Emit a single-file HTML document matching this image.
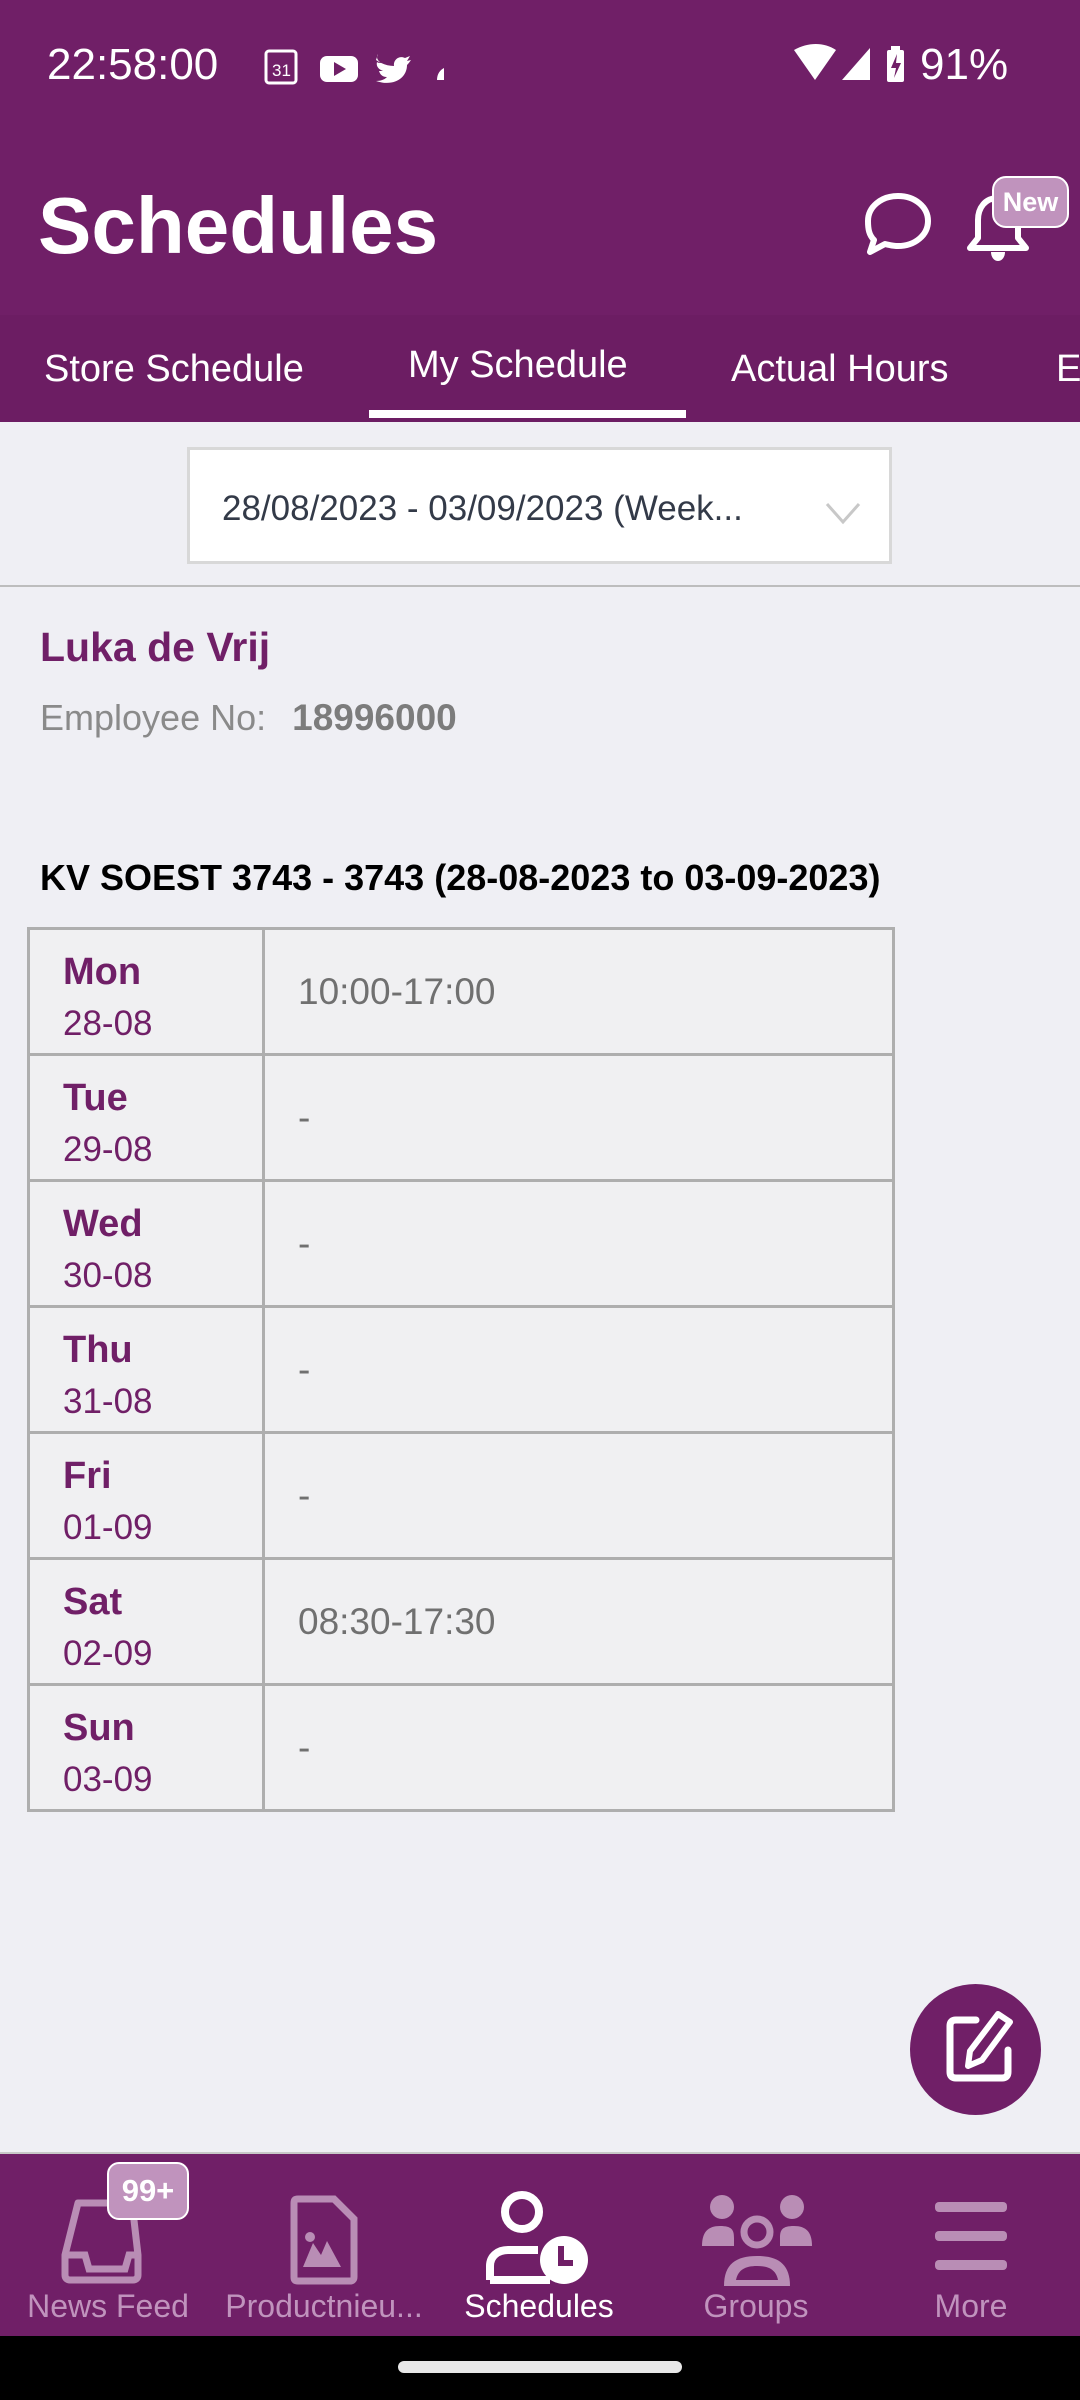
<!DOCTYPE html>
<html><head><meta charset="utf-8"><style>
*{margin:0;padding:0;box-sizing:border-box}
body{width:1080px;height:2400px;background:#efeff4;font-family:"Liberation Sans",sans-serif;position:relative;overflow:hidden}
.abs{position:absolute}
.p{background:#701f67}
.tab{position:absolute;color:#fff;font-size:38px;white-space:nowrap}
table{border-collapse:collapse;position:absolute;left:27px;top:927px;width:868px}
td{border:3px solid #aeaeae;height:126px;vertical-align:top;background:#f0f0f2}
tr{height:126px}
td.d{width:235px;padding-left:33px;color:#701f67}
td.d b{display:block;font-size:38px;margin-top:20px;line-height:44px}
td.d span{display:block;font-size:35px;line-height:40px;margin-top:10px}
td.t{padding-left:33px;color:#707070;font-size:37px;line-height:120px;vertical-align:middle}
.nl{position:absolute;top:2288px;font-size:32px;color:#c093bd;text-align:center;width:220px;white-space:nowrap}
</style></head><body>
<div class="abs p" style="left:0;top:0;width:1080px;height:315px"></div>
<div class="abs" style="left:0;top:315px;width:1080px;height:107px;background:#6c1d63"></div>
<div class="abs" style="left:47px;top:40px;color:#fff;font-size:44px">22:58:00</div>
<svg class="abs" style="left:264px;top:48px" width="190" height="40" viewBox="0 0 190 40">
<rect x="2" y="3" width="30" height="32" rx="3" fill="none" stroke="#fff" stroke-width="3"/><text x="8" y="28" font-size="17" fill="#fff" font-family="Liberation Sans">31</text>
<rect x="56" y="8" width="38" height="26" rx="7" fill="#fff"/><path d="M70 14l12 7-12 7z" fill="#701f67"/>
<path d="M112 12c6 4 12 6 18 6-1-6 5-11 11-8l5-2-3 5 4-1c-2 3-3 4-4 5 0 13-13 22-31 16 6 0 9-2 11-4-5 0-7-3-8-6h4c-5-2-7-5-6-9 1 1 3 1 4 1-4-3-5-6-3-9z" fill="#fff"/>
<path d="M180 20v12h-7c0-6 3-10 7-12z" fill="#fff"/></svg>
<svg class="abs" style="left:790px;top:44px" width="220" height="42" viewBox="0 0 220 42">
<path d="M4 6c14-8 30-8 42 0L25 36z" fill="#fff"/>
<path d="M80 4v32H52z" fill="#fff"/>
<rect x="97" y="6" width="17" height="32" rx="2" fill="#fff"/><rect x="101" y="2" width="9" height="5" fill="#fff"/><path d="M107 10l-6 14h5l-2 10 7-15h-5z" fill="#701f67"/>
</svg>
<div class="abs" style="left:920px;top:40px;color:#fff;font-size:44px">91%</div>
<div class="abs" style="left:38px;top:180px;color:#fff;font-size:80px;font-weight:bold">Schedules</div>
<svg class="abs" style="left:862px;top:190px" width="72" height="68" viewBox="0 0 72 68"><path d="M36 6c17 0 30 11 30 25S53 56 36 56c-5 0-9-1-13-2L8 62l4-12C7 45 6 39 6 31 6 17 19 6 36 6z" fill="none" stroke="#fff" stroke-width="6" stroke-linejoin="round"/></svg>
<svg class="abs" style="left:964px;top:186px" width="70" height="80" viewBox="0 0 70 80"><path d="M34 12c-13 0-20 10-20 22v18l-8 10h56l-8-10V34c0-12-7-22-20-22z" fill="none" stroke="#fff" stroke-width="6" stroke-linejoin="round"/><path d="M27 66c0 5 3 9 7 9s7-4 7-9z" fill="#fff"/></svg>
<div class="abs" style="left:992px;top:176px;width:77px;height:52px;background:#c093bd;border:2px solid #fff;border-radius:14px;color:#fff;font-weight:bold;font-size:27px;text-align:center;line-height:48px">New</div>
<div class="tab" style="left:44px;top:348px">Store Schedule</div>
<div class="tab" style="left:408px;top:344px">My Schedule</div>
<div class="tab" style="left:731px;top:348px">Actual Hours</div>
<div class="tab" style="left:1056px;top:348px">E</div>
<div class="abs" style="left:369px;top:410px;width:317px;height:8px;background:#fff"></div>
<div class="abs" style="left:187px;top:447px;width:705px;height:117px;background:#fff;border:3px solid #d8d8d8"></div>
<div class="abs" style="left:222px;top:489px;font-size:35px;color:#333a48">28/08/2023 - 03/09/2023 (Week...</div>
<svg class="abs" style="left:824px;top:500px" width="38" height="26" viewBox="0 0 38 26"><path d="M3 4l16 18L35 4" fill="none" stroke="#c8c8c8" stroke-width="3"/></svg>
<div class="abs" style="left:0;top:585px;width:1080px;height:2px;background:#bdbdbd"></div>
<div class="abs" style="left:40px;top:624px;font-size:41px;font-weight:bold;color:#701f67">Luka de Vrij</div>
<div class="abs" style="left:40px;top:697px;font-size:36px;color:#8a8a8a">Employee No:&nbsp; <b style="color:#7c7c7c;font-size:37px;margin-left:6px">18996000</b></div>
<div class="abs" style="left:40px;top:857px;font-size:36px;font-weight:bold;color:#000">KV SOEST 3743 - 3743 (28-08-2023 to 03-09-2023)</div>
<table>
<tr><td class="d"><b>Mon</b><span>28-08</span></td><td class="t">10:00-17:00</td></tr>
<tr><td class="d"><b>Tue</b><span>29-08</span></td><td class="t">-</td></tr>
<tr><td class="d"><b>Wed</b><span>30-08</span></td><td class="t">-</td></tr>
<tr><td class="d"><b>Thu</b><span>31-08</span></td><td class="t">-</td></tr>
<tr><td class="d"><b>Fri</b><span>01-09</span></td><td class="t">-</td></tr>
<tr><td class="d"><b>Sat</b><span>02-09</span></td><td class="t">08:30-17:30</td></tr>
<tr><td class="d"><b>Sun</b><span>03-09</span></td><td class="t">-</td></tr>
</table>
<div class="abs p" style="left:910px;top:1984px;width:131px;height:131px;border-radius:50%"></div>
<svg class="abs" style="left:936px;top:2004px" width="90" height="90" viewBox="0 0 90 90"><path d="M40 16H20c-4 0-6 2-6 6v46c0 4 2 6 6 6h46c4 0 6-2 6-6V46" fill="none" stroke="#fff" stroke-width="7" stroke-linecap="round"/><path d="M62 10l12 8-28 38-14 6 2-15z" fill="none" stroke="#fff" stroke-width="6" stroke-linejoin="round"/></svg>
<div class="abs p" style="left:0;top:2154px;width:1080px;height:182px"></div>
<div class="abs" style="left:0;top:2152px;width:1080px;height:2px;background:#c8c8c8"></div>
<div class="abs" style="left:0;top:2336px;width:1080px;height:64px;background:#000"></div>
<div class="abs" style="left:398px;top:2361px;width:284px;height:12px;border-radius:6px;background:#e8e8e8"></div>
<svg class="abs" style="left:60px;top:2195px" width="100" height="90" viewBox="0 0 100 90"><path d="M18 8h54l6 52v20c0 3-2 5-5 5H10c-3 0-5-2-5-5V60z" fill="none" stroke="#b98db5" stroke-width="7" stroke-linejoin="round"/><path d="M7 60h18l4 14h36l4-14h8" fill="none" stroke="#b98db5" stroke-width="7"/></svg>
<div class="abs" style="left:107px;top:2162px;width:82px;height:58px;background:#c093bd;border:2px solid #fff;border-radius:12px;color:#fff;font-weight:bold;font-size:31px;text-align:center;line-height:54px">99+</div>
<svg class="abs" style="left:290px;top:2195px" width="70" height="90" viewBox="0 0 70 90"><path d="M8 4h36l20 20v58c0 3-2 4-4 4H8c-3 0-4-1-4-4V8c0-3 1-4 4-4z" fill="none" stroke="#b98db5" stroke-width="7"/><circle cx="20" cy="42" r="5" fill="#b98db5"/><path d="M13 72l10-24 8 12 6-14 14 26z" fill="#b98db5"/></svg>
<svg class="abs" style="left:485px;top:2190px" width="110" height="100" viewBox="0 0 110 100"><circle cx="37" cy="22" r="17" fill="none" stroke="#fff" stroke-width="8"/><path d="M5 90V76c0-10 8-16 18-16h30" fill="none" stroke="#fff" stroke-width="8"/><path d="M5 90h60" stroke="#fff" stroke-width="8"/><circle cx="79" cy="70" r="24" fill="#fff"/><path d="M76 56v17h12" fill="none" stroke="#701f67" stroke-width="6"/></svg>
<svg class="abs" style="left:702px;top:2190px" width="110" height="100" viewBox="0 0 110 100"><circle cx="20" cy="17" r="12" fill="#b98db5"/><circle cx="90" cy="17" r="12" fill="#b98db5"/><path d="M0 56c0-14 6-20 18-20s14 4 14 12v8z M110 56c0-14-6-20-18-20s-14 4-14 12v8z" fill="#b98db5"/><circle cx="55" cy="42" r="13" fill="none" stroke="#b98db5" stroke-width="7"/><path d="M22 96c0-22 12-30 33-30s33 8 33 30z" fill="#b98db5"/><path d="M34 90c2-10 9-14 21-14s19 4 21 14z" fill="#701f67"/></svg>
<svg class="abs" style="left:933px;top:2198px" width="76" height="76" viewBox="0 0 76 76"><rect x="2" y="4" width="72" height="10" rx="4" fill="#b98db5"/><rect x="2" y="33" width="72" height="10" rx="4" fill="#b98db5"/><rect x="2" y="62" width="72" height="10" rx="4" fill="#b98db5"/></svg>
<div class="nl" style="left:-2px">News Feed</div>
<div class="nl" style="left:214px">Productnieu...</div>
<div class="nl" style="left:429px;color:#fff">Schedules</div>
<div class="nl" style="left:646px">Groups</div>
<div class="nl" style="left:861px">More</div>
</body></html>
